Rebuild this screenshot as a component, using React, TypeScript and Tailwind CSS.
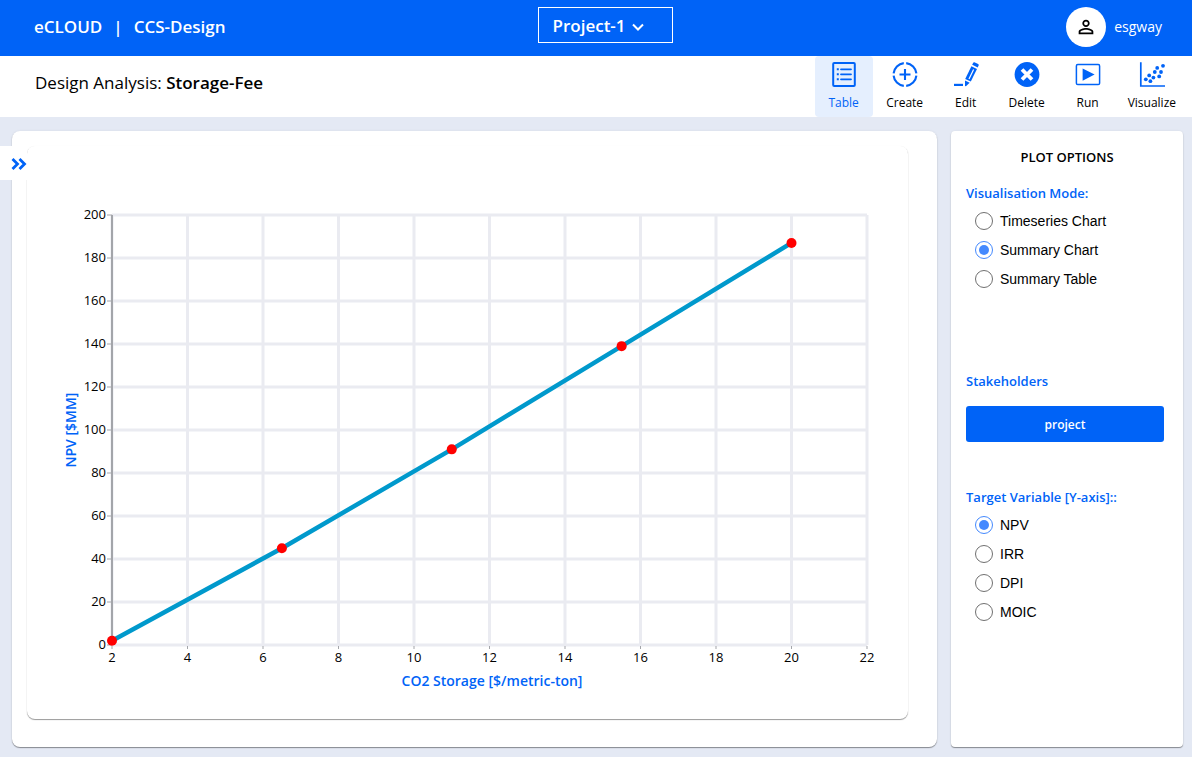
import { useState } from "react";
import type { ReactNode } from "react";
import { MdPersonOutline } from "react-icons/md";

const points = [
    { x: 2, y: 2 },
    { x: 6.5, y: 45 },
    { x: 11, y: 91 },
    { x: 15.5, y: 139 },
    { x: 20, y: 187 },
];

const xTicks = [2, 4, 6, 8, 10, 12, 14, 16, 18, 20, 22];
const yTicks = [0, 20, 40, 60, 80, 100, 120, 140, 160, 180, 200];

// Plot area inside the 881x573 chart
const LEFT = 85;
const RIGHT = 840;
const TOP = 69;
const BOTTOM = 499;

const toX = (v: number) => LEFT + ((v - 2) / 20) * (RIGHT - LEFT);
const toY = (v: number) => BOTTOM - (v / 200) * (BOTTOM - TOP);

function TableIcon() {
    return (
        <svg width="26" height="26" viewBox="0 0 26 26" fill="none" stroke="currentColor" strokeWidth="2">
            <rect x="2.2" y="2" width="21.6" height="23" rx="1" />
            <path d="M10 8.3h10M10 13.3h10M10 18.3h10" strokeWidth="1.8" strokeLinecap="round" />
            <path d="M5.8 8.3h2M5.8 13.3h2M5.8 18.3h2" strokeWidth="2" />
        </svg>
    );
}

function CreateIcon() {
    return (
        <svg width="26" height="26" viewBox="0 0 26 26" fill="none" stroke="currentColor" strokeWidth="2.1">
            <path d="M14.2 2.1a11.5 11.5 0 0 1 10.2 10.2M24.4 14.7a11.5 11.5 0 0 1-10.2 10.2M11.8 24.9a11.5 11.5 0 0 1-10.2-10.2M1.6 12.3a11.5 11.5 0 0 1 10.2-10.2" />
            <path d="M13 8v11M7.5 13.5h11" />
        </svg>
    );
}

function EditIcon() {
    return (
        <svg width="26" height="26" viewBox="0 0 26 26" fill="currentColor">
            <path d="M1 22.8h9V25H1z" />
            <path d="M18.4 5.2 24 7.9 17.8 20.6 12.2 17.9z" />
            <path d="M19.2 3.7 20.2 1.7Q20.6 1 21.4 1.3L25.1 3.1Q25.9 3.5 25.6 4.3L24.8 6.4z" />
            <path d="M12 19.4 16.7 21.7 12.9 25.3 12 24.9z" />
            <path d="M20.6 8.6 16 18" stroke="white" strokeWidth="1.2" />
        </svg>
    );
}

function DeleteIcon() {
    return (
        <svg width="26" height="26" viewBox="0 0 26 26">
            <circle cx="13" cy="13.5" r="12.4" fill="currentColor" />
            <path d="M8 8.5l10 10M18 8.5l-10 10" stroke="white" strokeWidth="3.8" />
        </svg>
    );
}

function RunIcon() {
    return (
        <svg width="26" height="26" viewBox="0 0 26 26">
            <rect x="1.4" y="3.6" width="23.2" height="20" rx="1.4" fill="none" stroke="currentColor" strokeWidth="1.5" />
            <path d="M7.6 7.4v12.4l12-6.2z" fill="currentColor" />
        </svg>
    );
}

function VisualizeIcon() {
    return (
        <svg width="26" height="26" viewBox="0 0 26 26" fill="currentColor">
            <path d="M1.8 1.2v23.8H26" fill="none" stroke="currentColor" strokeWidth="1.7" />
            <circle cx="6.8" cy="18.3" r="1.9" />
            <circle cx="11.4" cy="20.2" r="1.9" />
            <circle cx="10.2" cy="14.4" r="1.9" />
            <circle cx="14.4" cy="16.6" r="1.9" />
            <circle cx="15.8" cy="11" r="1.9" />
            <circle cx="20.2" cy="15.4" r="1.9" />
            <circle cx="18.2" cy="6.9" r="1.9" />
            <circle cx="22" cy="11" r="1.9" />
            <circle cx="24" cy="4.8" r="1.9" />
        </svg>
    );
}

const tools: { name: string; icon: ReactNode }[] = [
    { name: "Table", icon: <TableIcon /> },
    { name: "Create", icon: <CreateIcon /> },
    { name: "Edit", icon: <EditIcon /> },
    { name: "Delete", icon: <DeleteIcon /> },
    { name: "Run", icon: <RunIcon /> },
    { name: "Visualize", icon: <VisualizeIcon /> },
];

function Header() {
    return (
        <header className="grid h-14 grid-cols-[1fr_auto_1fr] items-center bg-[#0063f7] pr-4 pb-[2px] pl-[34px] text-white">
            <div className="flex gap-[11px] text-[17px] font-semibold">
                <span>eCLOUD</span>
                <span>|</span>
                <span>CCS-Design</span>
            </div>
            <div className="relative mb-1">
                <select
                    aria-label="Project"
                    className="block h-9 w-[135px] appearance-none border border-white bg-transparent pt-px pl-[14px] text-[17px] leading-8 font-semibold outline-none"
                >
                    <option>Project-1</option>
                </select>
                <svg
                    className="pointer-events-none absolute top-[15px] left-[94px]"
                    width="12"
                    height="12"
                    viewBox="0 0 12 12"
                    fill="none"
                    stroke="currentColor"
                    strokeWidth="2"
                >
                    <path d="M1 2.5l5 5 5-5" />
                </svg>
            </div>
            <div className="flex items-center justify-end gap-2 pr-[14px]">
                <div className="flex size-10 items-center justify-center rounded-full bg-white text-black">
                    <MdPersonOutline size={22} />
                </div>
                <span className="text-sm">esgway</span>
            </div>
        </header>
    );
}

function Toolbar() {
    const [active, setActive] = useState("Table");

    return (
        <div className="flex justify-between bg-white pr-2 pl-[35px]">
            <h1 className="pt-[15px] text-[17px] leading-6">
                Design Analysis: <span className="font-semibold">Storage-Fee</span>
            </h1>
            <nav className="flex gap-[3px]">
                {tools.map((tool) => (
                    <button
                        key={tool.name}
                        onClick={() => setActive(tool.name)}
                        className={`flex h-[61px] min-w-[58px] flex-col items-center rounded px-2 pt-[5px] text-xs ${
                            active === tool.name ? "bg-[#e5effe] text-[#0063f7]" : "text-black"
                        }`}
                    >
                        <span className="text-[#0063f7]">{tool.icon}</span>
                        <span className="mt-2">{tool.name}</span>
                    </button>
                ))}
            </nav>
        </div>
    );
}

function SummaryChart() {
    return (
        <svg viewBox="0 0 881 573" className="block h-auto w-full" role="img" aria-label="NPV by CO2 Storage">
            {/* Grid */}
            <g stroke="#eaebf1" strokeWidth="3">
                {yTicks.map((t) => (
                    <line key={t} x1={LEFT} x2={RIGHT} y1={toY(t)} y2={toY(t)} />
                ))}
                {xTicks.map((t) => (
                    <line key={t} x1={toX(t)} x2={toX(t)} y1={TOP} y2={BOTTOM} />
                ))}
            </g>

            {/* Axis line and tick marks */}
            <g stroke="#a3a5aa">
                <line x1={LEFT} x2={LEFT} y1={TOP} y2={BOTTOM} strokeWidth="2" />
                {yTicks.map((t) => (
                    <line key={t} x1={LEFT - 5} x2={LEFT} y1={toY(t)} y2={toY(t)} />
                ))}
                {xTicks.map((t) => (
                    <line key={t} x1={toX(t)} x2={toX(t)} y1={BOTTOM + 1} y2={BOTTOM + 4} />
                ))}
            </g>

            <g fontSize="13" fill="#000">
                {yTicks.map((t) => (
                    <text key={t} x={LEFT - 6} y={toY(t) + 4} textAnchor="end">
                        {t}
                    </text>
                ))}
                {xTicks.map((t) => (
                    <text key={t} x={toX(t)} y={BOTTOM + 17} textAnchor="middle">
                        {t}
                    </text>
                ))}
            </g>

            <g fontSize="14" fill="#0063f7" className="font-semibold">
                <text x="465" y="540" textAnchor="middle">
                    CO2 Storage [$/metric-ton]
                </text>
                <text transform="translate(49 284) rotate(-90)" textAnchor="middle">
                    NPV [$MM]
                </text>
            </g>

            <polyline
                points={points.map((p) => `${toX(p.x)},${toY(p.y)}`).join(" ")}
                fill="none"
                stroke="#0099cc"
                strokeWidth="4.5"
            />
            {points.map((p) => (
                <circle key={p.x} cx={toX(p.x)} cy={toY(p.y)} r="5" fill="red" />
            ))}
        </svg>
    );
}

type RadioGroupProps = {
    title: string;
    name: string;
    options: string[];
    initial: string;
};

function RadioGroup({ title, name, options, initial }: RadioGroupProps) {
    const [value, setValue] = useState(initial);

    return (
        <fieldset>
            <legend className="text-[13px] leading-5 font-semibold text-[#0063f7]">{title}</legend>
            <div className="mt-[9px] flex flex-col gap-[11px] pl-[9px]">
                {options.map((option) => (
                    <label
                        key={option}
                        className="flex h-[18px] items-center gap-[7px] font-['Liberation_Sans',sans-serif] text-sm"
                    >
                        <input
                            type="radio"
                            name={name}
                            checked={value === option}
                            onChange={() => setValue(option)}
                            className="size-[18px] appearance-none rounded-full border border-[#707070] bg-white bg-clip-content p-[3px] checked:border-[#4489fe] checked:bg-[#4489fe]"
                        />
                        {option}
                    </label>
                ))}
            </div>
        </fieldset>
    );
}

function PlotOptions() {
    return (
        <aside className="w-[232px] shrink-0 rounded bg-white px-[15px] pt-4 shadow-[0_1px_1px_rgba(0,0,0,0.4),0_0_3px_rgba(0,0,0,0.06)]">
            <h2 className="text-center text-[13px] leading-5 font-semibold">PLOT OPTIONS</h2>
            <div className="mt-4">
                <RadioGroup
                    title="Visualisation Mode:"
                    name="mode"
                    options={["Timeseries Chart", "Summary Chart", "Summary Table"]}
                    initial="Summary Chart"
                />
            </div>

            <div className="mt-[83px] mb-[45px] pr-1">
                <h3 className="text-[13px] leading-5 font-semibold text-[#0063f7]">Stakeholders</h3>
                <button className="mt-[15px] block h-9 w-full rounded-[3px] bg-[#0063f7] pt-px text-xs font-semibold text-white">
                    project
                </button>
            </div>

            <RadioGroup
                title="Target Variable [Y-axis]::"
                name="target"
                options={["NPV", "IRR", "DPI", "MOIC"]}
                initial="NPV"
            />
        </aside>
    );
}

export default function App() {
    return (
        <div className="flex min-h-screen flex-col bg-[#e4e9f4] font-['Open_Sans',sans-serif] text-black">
            <Header />
            <Toolbar />
            <main className="relative flex flex-1 gap-[14px] pt-[14px] pr-[9px] pb-[10px] pl-3">
                <section className="min-w-0 flex-1 rounded-lg bg-white pt-[15px] pr-[29px] pb-7 pl-[15px] shadow-[0_1px_1px_rgba(0,0,0,0.4),0_0_3px_rgba(0,0,0,0.06)]">
                    <div className="rounded-lg shadow-[0_1px_1px_rgba(0,0,0,0.4),0_0_1px_rgba(0,0,0,0.06)]">
                        <SummaryChart />
                    </div>
                </section>
                <PlotOptions />

                <button
                    aria-label="Expand"
                    className="absolute top-[29px] left-0 flex h-[34px] w-[27px] items-center justify-end bg-white pt-px text-[#0063f7]"
                >
                    <svg width="16" height="14" viewBox="0 0 16 14" fill="none" stroke="currentColor" strokeWidth="2.8">
                        <path d="M1.5 2l5 5-5 5M8.5 2l5 5-5 5" />
                    </svg>
                </button>
            </main>
        </div>
    );
}
